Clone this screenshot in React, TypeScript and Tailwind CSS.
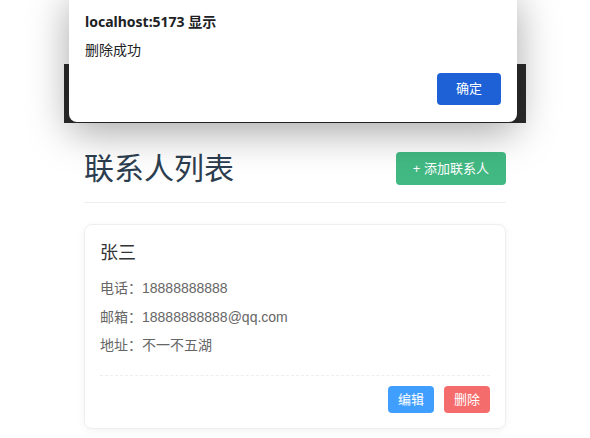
const contact = {
  name: "张三",
  phone: "18888888888",
  email: "18888888888@qq.com",
  address: "不一不五湖",
};

const font = "font-['Liberation_Sans','Noto_Sans_CJK_SC',sans-serif]";

export default function App() {
  return (
    <div className={`relative w-[590px] h-[438px] overflow-hidden bg-white ${font}`}>
      {/* page */}
      <div className="pt-[64px]">
        <div className="mx-auto w-[462px] h-[59px] bg-[#2c2c2c]" />

        <div className="mx-auto w-[422px]">
          <div className="mt-[27px] flex items-center justify-between border-b border-[#eee] pb-[15px]">
            <h1 className="text-[30px] leading-[37px] text-[#2c3e50]">联系人列表</h1>
            <button className="h-[33px] rounded-[4px] bg-[#42b983] px-[17px] text-[13px] text-white">
              + 添加联系人
            </button>
          </div>

          <div className="mt-[21px] rounded-[8px] border border-[#eee] p-[15px] shadow-[0_2px_8px_rgba(0,0,0,0.05)]">
            <h3 className="text-[18px] leading-[26px] text-[#333]">{contact.name}</h3>
            <div className="mt-[12px] flex flex-col gap-[8.5px] text-[14px] leading-[20px] text-[#666]">
              <p>电话：{contact.phone}</p>
              <p>邮箱：{contact.email}</p>
              <p>地址：{contact.address}</p>
            </div>
            <div className="mt-[20px] flex justify-end gap-[10px] border-t border-dashed border-[#eee] pt-[10px]">
              <button className="h-[27px] rounded-[4px] bg-[#409eff] px-[10px] text-[13px] text-white">
                编辑
              </button>
              <button className="h-[27px] rounded-[4px] bg-[#f56c6c] px-[10px] text-[13px] text-white">
                删除
              </button>
            </div>
          </div>
        </div>
      </div>

      {/* alert dialog */}
      <div className="absolute left-[69px] top-[-10px] w-[448px] h-[132px] rounded-[8px] bg-white pt-[10px] shadow-[0_10px_40px_rgba(0,0,0,0.35)] font-['Noto_Sans','Noto_Sans_CJK_SC',sans-serif]">
        <div className="px-[16px] pt-[12px]">
          <p className="text-[14px] font-bold leading-[20px] text-[#202124]">localhost:5173 显示</p>
          <p className="mt-[8px] text-[14px] leading-[20px] text-[#202124]">删除成功</p>
          <div className="mt-[13px] flex justify-end">
            <button className="h-[32px] w-[64px] rounded-[4px] bg-[#1e61d6] text-[13px] text-white">
              确定
            </button>
          </div>
        </div>
      </div>
    </div>
  );
}
